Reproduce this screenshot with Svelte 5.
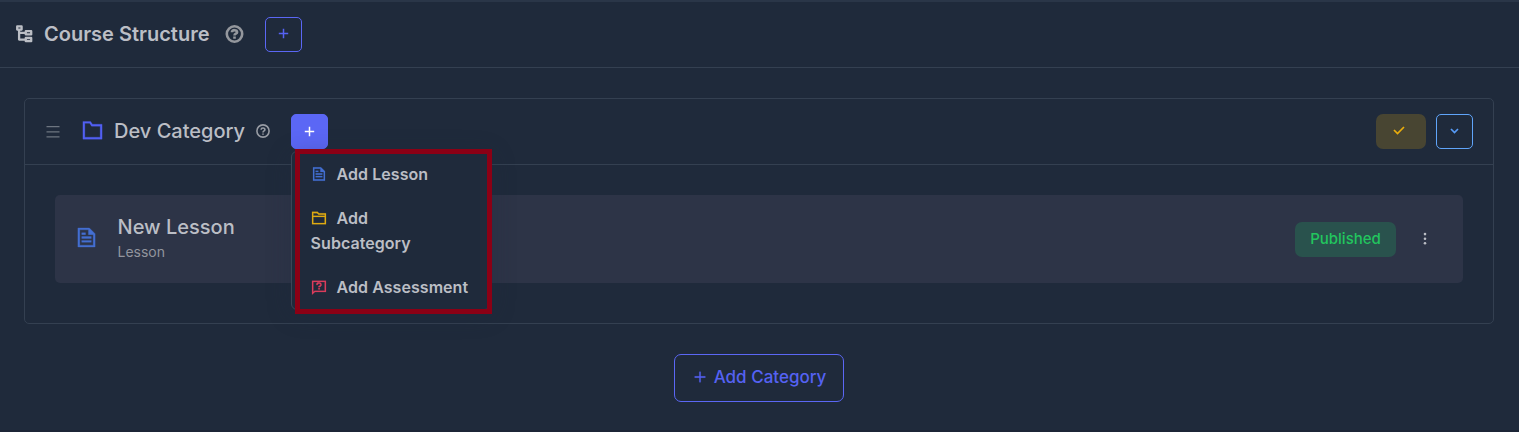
<script>
  const paths = {
    plus: 'M20 13H13V20H11V13H4V11H11V4H13V11H20Z',
    doc: 'M3 2H15L21 8V22H3ZM5 4V20H19V9H14V4ZM7 7H11V9H7ZM7 11H17V13H7ZM7 15H17V17H7Z',
    folder: 'M2 2.5H10L12 5.5H22V21H2ZM4 4.5V19H20V7.5H11L9 4.5Z',
    open: 'M1.5 2.5H10L12 5H22.5V21.5H1.5ZM3.5 5V8.5H20.5V7H11.3L9 4.8H3.5ZM3.5 10.5V19.5H20.5V10.5Z',
    chat: 'M1.5 2.5H22.5V19.5H6L1.5 23.5ZM3.5 4.5V19L5.5 17.5H20.5V4.5ZM11 13.4H13.2V15.6H11ZM8 9V8C8 5.5 10 5 12 5C14.5 5 16 6.5 16 8.5C16 10.5 14.5 11 13.2 12.3H11V11C12 9.7 14 9.8 14 8.5C14 6.5 10 6.5 10 9Z'
  };
  const items = [
    { label: 'Add Lesson', icon: 'doc', tone: 'blue' },
    { label: 'Add Subcategory', icon: 'open', tone: 'gold' },
    { label: 'Add Assessment', icon: 'chat', tone: 'pink' }
  ];
</script>

{#snippet icon(name, size)}
  <svg width={size} height={size} viewBox="0 0 24 24" fill="currentColor" stroke="currentColor" stroke-width=".3" fill-rule="evenodd"><path d={paths[name]} /></svg>
{/snippet}

{#snippet smallPlus()}
  <svg width="11" height="11" viewBox="0 0 11 11" stroke="currentColor" stroke-width="1.5"><path d="M5.5 .8V10.2M.8 5.5H10.2" /></svg>
{/snippet}

<main>
  <header class="top">
    <svg class="tree" width="18" height="18" viewBox="0 0 18 18" fill="none" stroke="currentColor" stroke-width="2.3" stroke-linejoin="round">
      <path d="M2.2 1.4H6.6V4.6H2.2ZM4.1 5V14.6H10M4.1 7.8H10M10.8 6.2H16.2V9.4H10.8ZM10.8 13H16.2V16.2H10.8Z" />
    </svg>
    <h1>Course Structure</h1>
    <svg class="help" width="20" height="20" viewBox="0 0 20 20" fill="none" stroke="currentColor" stroke-width="2.6">
      <circle cx="10.5" cy="10" r="7.7" /><path d="M7.9 8.2C7.9 5.4 13.1 5.6 13.1 8.2C13.1 9.8 10.5 9.6 10.5 11.4M10.5 12.4V14.8" />
    </svg>
    <button class="square">{@render smallPlus()}</button>
  </header>

  <section class="card">
    <header class="category">
      <svg class="grip" width="14" height="12" viewBox="0 0 14 12" stroke="currentColor" stroke-width="1.2"><path d="M.5 .7H13.5M.5 5.8H13.5M.5 10.9H13.5" /></svg>
      <span class="folder">{@render icon('folder', 23)}</span>
      <h2>Dev Category</h2>
      <svg class="hint" width="14" height="14" viewBox="0 0 14 14" fill="none" stroke="currentColor" stroke-width="1.6">
        <circle cx="7" cy="7" r="6.1" /><path d="M5.1 5.8C5.2 3.4 8.9 3.6 8.9 5.8C8.9 7 7 6.9 7 8.4M7 9.4V10.7" />
      </svg>
      <div class="adder">
        <button class="square filled">{@render smallPlus()}</button>
        <div class="menu">
          {#each items as item}
            <div class="option"><span class="glyph {item.tone}">{@render icon(item.icon, 16)}</span>{item.label}</div>
          {/each}
        </div>
        <div class="highlight"></div>
      </div>
      <button class="check"><svg width="12" height="9" viewBox="0 0 12 9" fill="none" stroke="currentColor" stroke-width="1.7"><path d="M1 4L4.5 7.5L11 1" /></svg></button>
      <button class="square toggle"><svg width="9" height="6" viewBox="0 0 9 6" fill="none" stroke="currentColor" stroke-width="1.7"><path d="M1 1L4.5 4.5L8 1" /></svg></button>
    </header>
    <div class="body">
      <article class="lesson">
        <span class="doc">{@render icon('doc', 23)}</span>
        <div class="text"><h3>New Lesson</h3><p>Lesson</p></div>
        <span class="badge">Published</span>
        <svg class="dots" width="4" height="14" viewBox="0 0 4 14" fill="currentColor"><circle cx="2" cy="2.1" r="1.3" /><circle cx="2" cy="6.7" r="1.3" /><circle cx="2" cy="11.3" r="1.3" /></svg>
      </article>
    </div>
  </section>

  <button class="add">{@render icon('plus', 16)}<span>Add Category</span></button>
</main>

<style>
  :global(body) { margin: 0; background: #1f2a3b; }
  main {
    box-sizing: border-box; height: 432px; background: #1f2a3b;
    border-top: 2px solid #2a3648; border-bottom: 2px solid #1c2536;
    color: #bbbec5; font-family: Inter, sans-serif; overflow: hidden;
  }
  svg { display: block; flex: none; }
  h1, h2, h3, p { margin: 0; white-space: nowrap; }
  button {
    box-sizing: border-box; display: flex; align-items: center; justify-content: center;
    padding: 0; font: inherit; background: none; border: 1px solid #5b67f5; color: #5562f3;
  }
  .top { box-sizing: border-box; height: 66px; display: flex; align-items: center; padding: 0 15px; border-bottom: 1px solid #344051; }
  .tree { margin-top: -1px; }
  h1 { width: 166px; margin: -2px 14px 0 11px; font-size: 20px; line-height: 30px; font-weight: 600; }
  .help { color: #94979d; margin: -1px 21px 0 0; }
  .square { width: 37px; height: 35px; border-radius: 5px; flex: none; }
  .top .square { padding: 0 1px 2px 0; }
  .filled { padding-bottom: 1px; }
  .card { box-sizing: border-box; height: 226px; margin: 30px 25px 30px 24px; border: 1px solid #344051; border-radius: 5px; }
  .category { height: 65px; display: flex; align-items: center; border-bottom: 1px solid #344051; padding: 0 20px 0 21px; }
  .grip { color: #6d7580; }
  .folder { color: #5260f3; margin: -3px 0 0 21px; }
  h2 { width: 131px; margin: -2px 11px 0 10px; font-size: 20px; line-height: 30px; font-weight: 500; }
  .hint { color: #989ca4; margin: -1px 21px 0 0; }
  .adder { position: relative; }
  .filled { background: #5b67f5; color: #fff; }
  .menu {
    position: absolute; z-index: 1; box-sizing: border-box; left: 0; top: 37px; width: 200px; height: 159px;
    padding: 1px 18.6px; border: 1px solid #3b4657; border-radius: 6px; background: #1f2a3b;
    box-shadow: 0 4px 24px #1f2a3b50;
  }
  .option { width: 160px; padding: 9px 0 10px; font-size: 16px; line-height: 25px; font-weight: 600; letter-spacing: .05px; }
  .option:nth-child(2) { width: 136px; }
  .glyph { display: inline-block; vertical-align: -2px; margin-right: 10px; }
  .blue, .doc { color: #446fd2; }
  .doc { margin-top: -3px; }
  .gold { color: #dfab12; }
  .pink { color: #dc3d5d; }
  .highlight { position: absolute; z-index: 2; box-sizing: border-box; left: 4px; top: 35px; width: 197px; height: 165px; border: 5px solid #8b0015; }
  .check { margin-left: auto; width: 50px; height: 35px; border: 0; border-radius: 7px; background: #484532; color: #eaad0c; padding: 0 5px 2px 0; }
  .toggle { margin-left: 10px; border-color: #60a5fa; color: #579bf7; padding-bottom: 2px; }
  .body { padding: 30px; }
  .lesson { box-sizing: border-box; height: 88px; display: flex; align-items: center; background: #2d3447; border-radius: 5px; padding: 0 36px 0 20px; }
  .text { margin: 0 auto 0 19.5px; }
  h3 { font-size: 20px; line-height: 26px; font-weight: 500; }
  p { color: #92959e; font-size: 14px; line-height: 24px; }
  .badge { box-sizing: border-box; width: 101px; height: 35px; border-radius: 7px; background: #29524d; color: #22c55e; font-size: 15px; line-height: 34px; font-weight: 500; text-align: center; }
  .dots { margin-left: 27px; }
  .add { width: 170px; height: 48px; margin: 0 auto; padding: 0 0 2px 1px; border-radius: 7px; font-size: 17px; font-weight: 500; gap: 6px; position: relative; left: -1px; }
  .add span { white-space: nowrap; }
</style>
